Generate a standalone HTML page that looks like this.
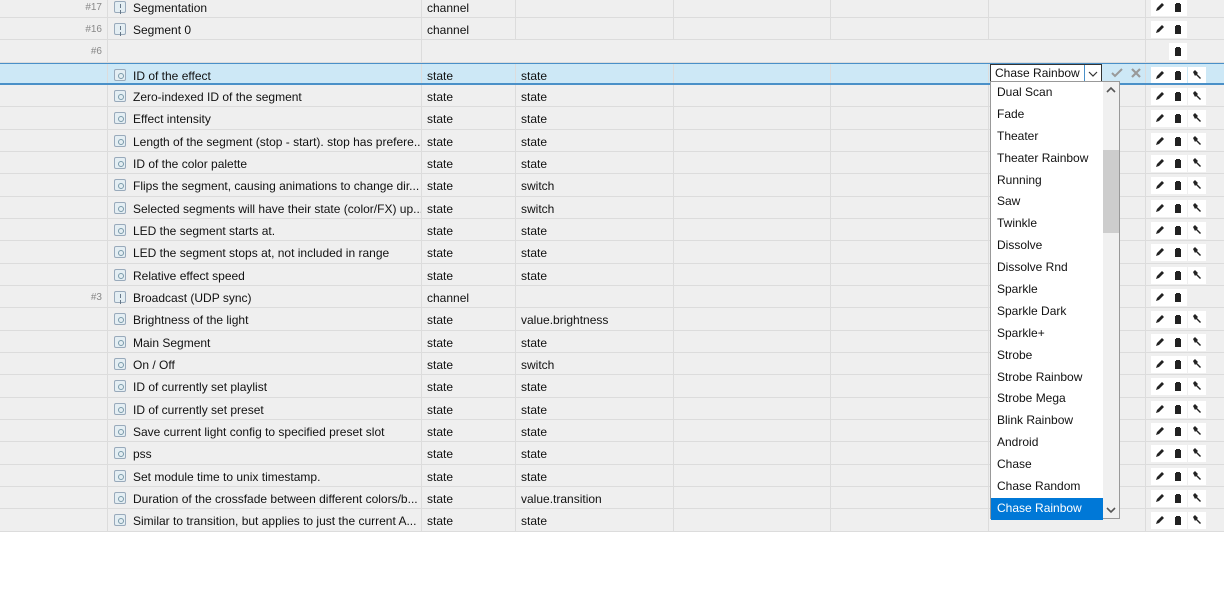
<!DOCTYPE html>
<html><head><meta charset="utf-8"><style>
*{box-sizing:border-box;margin:0;padding:0}
body{width:1224px;height:595px;background:#fff;font-family:"Liberation Sans",Arial,sans-serif;font-size:12px;color:#111;position:relative;overflow:hidden}
.rows{position:absolute;left:0;top:-4.5px;width:1224px}
.r{height:22.35px;position:relative;background:#efefef;border-bottom:1px solid #dcdcdc}
.r.sel{background:#cde8f6;border-top:1px solid #4a90c8;border-bottom:2px solid #4a90c8}
.c{position:absolute;top:0;bottom:0;border-right:1px solid #dcdcdc;line-height:24px;white-space:nowrap;overflow:hidden}
.c0{left:0;width:108px;text-align:right;padding-right:5px;color:#888;font-size:10px}
.c1{left:108px;width:314px;padding-left:25px}
.c2{left:422px;width:94px;padding-left:5px}
.c3{left:516px;width:158px;padding-left:5px}
.c4{left:674px;width:157px}
.c5{left:831px;width:158px}
.c6{left:989px;width:157px}
.c7{left:1146px;width:78px;border-right:none}
.ic{position:absolute;left:6px;top:5px;width:12px;height:12px;border:1px solid #9ab;border-radius:2px;background:#e4eef3}
.ic.st::after{content:"";position:absolute;left:3px;top:3px;width:4px;height:4px;border:1px solid #7a9aaa;border-radius:50%}
.ic.ch::after{content:"";position:absolute;left:4.5px;top:2px;width:1px;height:4px;background:#678;box-shadow:0 6px 0 #678}
.b{position:absolute;top:3px;width:18px;height:17px;background:#fff}
.b svg{position:absolute;left:4px;top:3px}
.p{left:5px}.t{left:23px}.w{left:42px}
.dd{position:absolute;left:990px;top:64px;width:112px;height:19px;background:#fff;border:1px solid #333;line-height:16px;padding-left:4px;font-size:12px}
.dd .ar{position:absolute;right:0;top:0;width:17px;height:17px;border-left:1px solid #4a90c8}
.list{position:absolute;left:990px;top:81px;width:130px;height:438px;background:#fff;border:1px solid #999}
.it{height:21.9px;line-height:21.9px;padding-left:6px;font-size:12px;width:112px}
.it.h{background:#0078d7;color:#fff}
.sb{position:absolute;right:0;top:0;width:16px;height:436px;background:#f0f0f0}
.th{position:absolute;left:0;width:16px;top:68px;height:83px;background:#cdcdcd}
</style></head><body>
<div class="rows">
<div class="r"><div class="c c0">#17</div><div class="c c1"><span class="ic ch"></span>Segmentation</div><div class="c c2">channel</div><div class="c c3"></div><div class="c c4"></div><div class="c c5"></div><div class="c c6"></div><div class="c c7"><span class="b p"><svg width="10" height="10"><path d="M1 9l1-3 5-5 2 2-5 5z" fill="#222"/></svg></span><span class="b t"><svg width="10" height="11"><path d="M2 2h6v8H2zM3 1h4v1H3z" fill="#222"/></svg></span></div></div>
<div class="r"><div class="c c0">#16</div><div class="c c1"><span class="ic ch"></span>Segment 0</div><div class="c c2">channel</div><div class="c c3"></div><div class="c c4"></div><div class="c c5"></div><div class="c c6"></div><div class="c c7"><span class="b p"><svg width="10" height="10"><path d="M1 9l1-3 5-5 2 2-5 5z" fill="#222"/></svg></span><span class="b t"><svg width="10" height="11"><path d="M2 2h6v8H2zM3 1h4v1H3z" fill="#222"/></svg></span></div></div>
<div class="r"><div class="c c0">#6</div><div class="c c1"></div><div class="c c2" style="border:none"></div><div class="c c3" style="border:none"></div><div class="c c4" style="border:none"></div><div class="c c5" style="border:none"></div><div class="c c6"></div><div class="c c7"><span class="b t"><svg width="10" height="11"><path d="M2 2h6v8H2zM3 1h4v1H3z" fill="#222"/></svg></span></div></div>
<div class="r sel"><div class="c c0"></div><div class="c c1"><span class="ic st"></span>ID of the effect</div><div class="c c2">state</div><div class="c c3">state</div><div class="c c4"></div><div class="c c5"></div><div class="c c6"></div><div class="c c7"><span class="b p"><svg width="10" height="10"><path d="M1 9l1-3 5-5 2 2-5 5z" fill="#222"/></svg></span><span class="b t"><svg width="10" height="11"><path d="M2 2h6v8H2zM3 1h4v1H3z" fill="#222"/></svg></span><span class="b w"><svg width="10" height="10"><path d="M1 2l2-2 3 3-1 1 4 4-1 1-4-4-1 1z" fill="#222"/></svg></span></div></div>
<div class="r"><div class="c c0"></div><div class="c c1"><span class="ic st"></span>Zero-indexed ID of the segment</div><div class="c c2">state</div><div class="c c3">state</div><div class="c c4"></div><div class="c c5"></div><div class="c c6"></div><div class="c c7"><span class="b p"><svg width="10" height="10"><path d="M1 9l1-3 5-5 2 2-5 5z" fill="#222"/></svg></span><span class="b t"><svg width="10" height="11"><path d="M2 2h6v8H2zM3 1h4v1H3z" fill="#222"/></svg></span><span class="b w"><svg width="10" height="10"><path d="M1 2l2-2 3 3-1 1 4 4-1 1-4-4-1 1z" fill="#222"/></svg></span></div></div>
<div class="r"><div class="c c0"></div><div class="c c1"><span class="ic st"></span>Effect intensity</div><div class="c c2">state</div><div class="c c3">state</div><div class="c c4"></div><div class="c c5"></div><div class="c c6"></div><div class="c c7"><span class="b p"><svg width="10" height="10"><path d="M1 9l1-3 5-5 2 2-5 5z" fill="#222"/></svg></span><span class="b t"><svg width="10" height="11"><path d="M2 2h6v8H2zM3 1h4v1H3z" fill="#222"/></svg></span><span class="b w"><svg width="10" height="10"><path d="M1 2l2-2 3 3-1 1 4 4-1 1-4-4-1 1z" fill="#222"/></svg></span></div></div>
<div class="r"><div class="c c0"></div><div class="c c1"><span class="ic st"></span>Length of the segment (stop - start). stop has prefere...</div><div class="c c2">state</div><div class="c c3">state</div><div class="c c4"></div><div class="c c5"></div><div class="c c6"></div><div class="c c7"><span class="b p"><svg width="10" height="10"><path d="M1 9l1-3 5-5 2 2-5 5z" fill="#222"/></svg></span><span class="b t"><svg width="10" height="11"><path d="M2 2h6v8H2zM3 1h4v1H3z" fill="#222"/></svg></span><span class="b w"><svg width="10" height="10"><path d="M1 2l2-2 3 3-1 1 4 4-1 1-4-4-1 1z" fill="#222"/></svg></span></div></div>
<div class="r"><div class="c c0"></div><div class="c c1"><span class="ic st"></span>ID of the color palette</div><div class="c c2">state</div><div class="c c3">state</div><div class="c c4"></div><div class="c c5"></div><div class="c c6"></div><div class="c c7"><span class="b p"><svg width="10" height="10"><path d="M1 9l1-3 5-5 2 2-5 5z" fill="#222"/></svg></span><span class="b t"><svg width="10" height="11"><path d="M2 2h6v8H2zM3 1h4v1H3z" fill="#222"/></svg></span><span class="b w"><svg width="10" height="10"><path d="M1 2l2-2 3 3-1 1 4 4-1 1-4-4-1 1z" fill="#222"/></svg></span></div></div>
<div class="r"><div class="c c0"></div><div class="c c1"><span class="ic st"></span>Flips the segment, causing animations to change dir...</div><div class="c c2">state</div><div class="c c3">switch</div><div class="c c4"></div><div class="c c5"></div><div class="c c6"></div><div class="c c7"><span class="b p"><svg width="10" height="10"><path d="M1 9l1-3 5-5 2 2-5 5z" fill="#222"/></svg></span><span class="b t"><svg width="10" height="11"><path d="M2 2h6v8H2zM3 1h4v1H3z" fill="#222"/></svg></span><span class="b w"><svg width="10" height="10"><path d="M1 2l2-2 3 3-1 1 4 4-1 1-4-4-1 1z" fill="#222"/></svg></span></div></div>
<div class="r"><div class="c c0"></div><div class="c c1"><span class="ic st"></span>Selected segments will have their state (color/FX) up...</div><div class="c c2">state</div><div class="c c3">switch</div><div class="c c4"></div><div class="c c5"></div><div class="c c6"></div><div class="c c7"><span class="b p"><svg width="10" height="10"><path d="M1 9l1-3 5-5 2 2-5 5z" fill="#222"/></svg></span><span class="b t"><svg width="10" height="11"><path d="M2 2h6v8H2zM3 1h4v1H3z" fill="#222"/></svg></span><span class="b w"><svg width="10" height="10"><path d="M1 2l2-2 3 3-1 1 4 4-1 1-4-4-1 1z" fill="#222"/></svg></span></div></div>
<div class="r"><div class="c c0"></div><div class="c c1"><span class="ic st"></span>LED the segment starts at.</div><div class="c c2">state</div><div class="c c3">state</div><div class="c c4"></div><div class="c c5"></div><div class="c c6"></div><div class="c c7"><span class="b p"><svg width="10" height="10"><path d="M1 9l1-3 5-5 2 2-5 5z" fill="#222"/></svg></span><span class="b t"><svg width="10" height="11"><path d="M2 2h6v8H2zM3 1h4v1H3z" fill="#222"/></svg></span><span class="b w"><svg width="10" height="10"><path d="M1 2l2-2 3 3-1 1 4 4-1 1-4-4-1 1z" fill="#222"/></svg></span></div></div>
<div class="r"><div class="c c0"></div><div class="c c1"><span class="ic st"></span>LED the segment stops at, not included in range</div><div class="c c2">state</div><div class="c c3">state</div><div class="c c4"></div><div class="c c5"></div><div class="c c6"></div><div class="c c7"><span class="b p"><svg width="10" height="10"><path d="M1 9l1-3 5-5 2 2-5 5z" fill="#222"/></svg></span><span class="b t"><svg width="10" height="11"><path d="M2 2h6v8H2zM3 1h4v1H3z" fill="#222"/></svg></span><span class="b w"><svg width="10" height="10"><path d="M1 2l2-2 3 3-1 1 4 4-1 1-4-4-1 1z" fill="#222"/></svg></span></div></div>
<div class="r"><div class="c c0"></div><div class="c c1"><span class="ic st"></span>Relative effect speed</div><div class="c c2">state</div><div class="c c3">state</div><div class="c c4"></div><div class="c c5"></div><div class="c c6"></div><div class="c c7"><span class="b p"><svg width="10" height="10"><path d="M1 9l1-3 5-5 2 2-5 5z" fill="#222"/></svg></span><span class="b t"><svg width="10" height="11"><path d="M2 2h6v8H2zM3 1h4v1H3z" fill="#222"/></svg></span><span class="b w"><svg width="10" height="10"><path d="M1 2l2-2 3 3-1 1 4 4-1 1-4-4-1 1z" fill="#222"/></svg></span></div></div>
<div class="r"><div class="c c0">#3</div><div class="c c1"><span class="ic ch"></span>Broadcast (UDP sync)</div><div class="c c2">channel</div><div class="c c3"></div><div class="c c4"></div><div class="c c5"></div><div class="c c6"></div><div class="c c7"><span class="b p"><svg width="10" height="10"><path d="M1 9l1-3 5-5 2 2-5 5z" fill="#222"/></svg></span><span class="b t"><svg width="10" height="11"><path d="M2 2h6v8H2zM3 1h4v1H3z" fill="#222"/></svg></span></div></div>
<div class="r"><div class="c c0"></div><div class="c c1"><span class="ic st"></span>Brightness of the light</div><div class="c c2">state</div><div class="c c3">value.brightness</div><div class="c c4"></div><div class="c c5"></div><div class="c c6"></div><div class="c c7"><span class="b p"><svg width="10" height="10"><path d="M1 9l1-3 5-5 2 2-5 5z" fill="#222"/></svg></span><span class="b t"><svg width="10" height="11"><path d="M2 2h6v8H2zM3 1h4v1H3z" fill="#222"/></svg></span><span class="b w"><svg width="10" height="10"><path d="M1 2l2-2 3 3-1 1 4 4-1 1-4-4-1 1z" fill="#222"/></svg></span></div></div>
<div class="r"><div class="c c0"></div><div class="c c1"><span class="ic st"></span>Main Segment</div><div class="c c2">state</div><div class="c c3">state</div><div class="c c4"></div><div class="c c5"></div><div class="c c6"></div><div class="c c7"><span class="b p"><svg width="10" height="10"><path d="M1 9l1-3 5-5 2 2-5 5z" fill="#222"/></svg></span><span class="b t"><svg width="10" height="11"><path d="M2 2h6v8H2zM3 1h4v1H3z" fill="#222"/></svg></span><span class="b w"><svg width="10" height="10"><path d="M1 2l2-2 3 3-1 1 4 4-1 1-4-4-1 1z" fill="#222"/></svg></span></div></div>
<div class="r"><div class="c c0"></div><div class="c c1"><span class="ic st"></span>On / Off</div><div class="c c2">state</div><div class="c c3">switch</div><div class="c c4"></div><div class="c c5"></div><div class="c c6"></div><div class="c c7"><span class="b p"><svg width="10" height="10"><path d="M1 9l1-3 5-5 2 2-5 5z" fill="#222"/></svg></span><span class="b t"><svg width="10" height="11"><path d="M2 2h6v8H2zM3 1h4v1H3z" fill="#222"/></svg></span><span class="b w"><svg width="10" height="10"><path d="M1 2l2-2 3 3-1 1 4 4-1 1-4-4-1 1z" fill="#222"/></svg></span></div></div>
<div class="r"><div class="c c0"></div><div class="c c1"><span class="ic st"></span>ID of currently set playlist</div><div class="c c2">state</div><div class="c c3">state</div><div class="c c4"></div><div class="c c5"></div><div class="c c6"></div><div class="c c7"><span class="b p"><svg width="10" height="10"><path d="M1 9l1-3 5-5 2 2-5 5z" fill="#222"/></svg></span><span class="b t"><svg width="10" height="11"><path d="M2 2h6v8H2zM3 1h4v1H3z" fill="#222"/></svg></span><span class="b w"><svg width="10" height="10"><path d="M1 2l2-2 3 3-1 1 4 4-1 1-4-4-1 1z" fill="#222"/></svg></span></div></div>
<div class="r"><div class="c c0"></div><div class="c c1"><span class="ic st"></span>ID of currently set preset</div><div class="c c2">state</div><div class="c c3">state</div><div class="c c4"></div><div class="c c5"></div><div class="c c6"></div><div class="c c7"><span class="b p"><svg width="10" height="10"><path d="M1 9l1-3 5-5 2 2-5 5z" fill="#222"/></svg></span><span class="b t"><svg width="10" height="11"><path d="M2 2h6v8H2zM3 1h4v1H3z" fill="#222"/></svg></span><span class="b w"><svg width="10" height="10"><path d="M1 2l2-2 3 3-1 1 4 4-1 1-4-4-1 1z" fill="#222"/></svg></span></div></div>
<div class="r"><div class="c c0"></div><div class="c c1"><span class="ic st"></span>Save current light config to specified preset slot</div><div class="c c2">state</div><div class="c c3">state</div><div class="c c4"></div><div class="c c5"></div><div class="c c6"></div><div class="c c7"><span class="b p"><svg width="10" height="10"><path d="M1 9l1-3 5-5 2 2-5 5z" fill="#222"/></svg></span><span class="b t"><svg width="10" height="11"><path d="M2 2h6v8H2zM3 1h4v1H3z" fill="#222"/></svg></span><span class="b w"><svg width="10" height="10"><path d="M1 2l2-2 3 3-1 1 4 4-1 1-4-4-1 1z" fill="#222"/></svg></span></div></div>
<div class="r"><div class="c c0"></div><div class="c c1"><span class="ic st"></span>pss</div><div class="c c2">state</div><div class="c c3">state</div><div class="c c4"></div><div class="c c5"></div><div class="c c6"></div><div class="c c7"><span class="b p"><svg width="10" height="10"><path d="M1 9l1-3 5-5 2 2-5 5z" fill="#222"/></svg></span><span class="b t"><svg width="10" height="11"><path d="M2 2h6v8H2zM3 1h4v1H3z" fill="#222"/></svg></span><span class="b w"><svg width="10" height="10"><path d="M1 2l2-2 3 3-1 1 4 4-1 1-4-4-1 1z" fill="#222"/></svg></span></div></div>
<div class="r"><div class="c c0"></div><div class="c c1"><span class="ic st"></span>Set module time to unix timestamp.</div><div class="c c2">state</div><div class="c c3">state</div><div class="c c4"></div><div class="c c5"></div><div class="c c6"></div><div class="c c7"><span class="b p"><svg width="10" height="10"><path d="M1 9l1-3 5-5 2 2-5 5z" fill="#222"/></svg></span><span class="b t"><svg width="10" height="11"><path d="M2 2h6v8H2zM3 1h4v1H3z" fill="#222"/></svg></span><span class="b w"><svg width="10" height="10"><path d="M1 2l2-2 3 3-1 1 4 4-1 1-4-4-1 1z" fill="#222"/></svg></span></div></div>
<div class="r"><div class="c c0"></div><div class="c c1"><span class="ic st"></span>Duration of the crossfade between different colors/b...</div><div class="c c2">state</div><div class="c c3">value.transition</div><div class="c c4"></div><div class="c c5"></div><div class="c c6"></div><div class="c c7"><span class="b p"><svg width="10" height="10"><path d="M1 9l1-3 5-5 2 2-5 5z" fill="#222"/></svg></span><span class="b t"><svg width="10" height="11"><path d="M2 2h6v8H2zM3 1h4v1H3z" fill="#222"/></svg></span><span class="b w"><svg width="10" height="10"><path d="M1 2l2-2 3 3-1 1 4 4-1 1-4-4-1 1z" fill="#222"/></svg></span></div></div>
<div class="r"><div class="c c0"></div><div class="c c1"><span class="ic st"></span>Similar to transition, but applies to just the current A...</div><div class="c c2">state</div><div class="c c3">state</div><div class="c c4"></div><div class="c c5"></div><div class="c c6"></div><div class="c c7"><span class="b p"><svg width="10" height="10"><path d="M1 9l1-3 5-5 2 2-5 5z" fill="#222"/></svg></span><span class="b t"><svg width="10" height="11"><path d="M2 2h6v8H2zM3 1h4v1H3z" fill="#222"/></svg></span><span class="b w"><svg width="10" height="10"><path d="M1 2l2-2 3 3-1 1 4 4-1 1-4-4-1 1z" fill="#222"/></svg></span></div></div>
</div>

<div class="dd">Chase Rainbow<span class="ar"><svg width="16" height="16"><path d="M4 7l4 4 4-4" stroke="#333" fill="none" stroke-width="1.2"/></svg></span></div>
<svg style="position:absolute;left:1111px;top:67px" width="12" height="12"><path d="M1 6l3 3 7-7" stroke="#999" stroke-width="2" fill="none"/></svg>
<svg style="position:absolute;left:1131px;top:68px" width="10" height="10"><path d="M1 1l8 8M9 1l-8 8" stroke="#999" stroke-width="2.2"/></svg>

<div class="list">
<div class="it">Dual Scan</div><div class="it">Fade</div><div class="it">Theater</div><div class="it">Theater Rainbow</div><div class="it">Running</div><div class="it">Saw</div><div class="it">Twinkle</div><div class="it">Dissolve</div><div class="it">Dissolve Rnd</div><div class="it">Sparkle</div><div class="it">Sparkle Dark</div><div class="it">Sparkle+</div><div class="it">Strobe</div><div class="it">Strobe Rainbow</div><div class="it">Strobe Mega</div><div class="it">Blink Rainbow</div><div class="it">Android</div><div class="it">Chase</div><div class="it">Chase Random</div><div class="it h">Chase Rainbow</div>
<div class="sb"><svg style="position:absolute;left:3px;top:4px" width="10" height="8"><path d="M1 6l4-4 4 4" stroke="#555" stroke-width="1.6" fill="none"/></svg><div class="th"></div><svg style="position:absolute;left:3px;top:424px" width="10" height="8"><path d="M1 2l4 4 4-4" stroke="#555" stroke-width="1.6" fill="none"/></svg></div>
</div>
</body></html>
